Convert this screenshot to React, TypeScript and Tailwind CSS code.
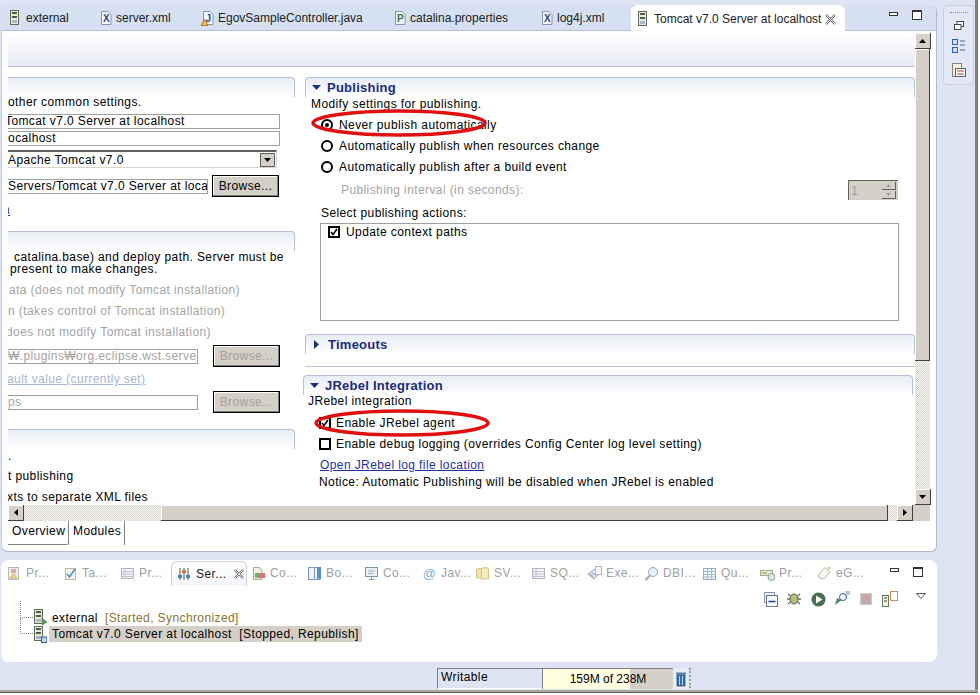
import React from "react";

const font = { fontFamily: '"Liberation Sans", "Noto Sans CJK KR", sans-serif' };

function ServerIcon({ badge }: { badge?: "play" | "stop" }) {
  return (
    <svg width="14" height="17" viewBox="0 0 14 17" className="shrink-0">
      <rect x="1.5" y="0.5" width="8" height="14" fill="#e8e8dc" stroke="#5f6b55" />
      <rect x="3" y="2" width="5" height="2" fill="#4f5a48" />
      <rect x="3" y="6" width="5" height="2" fill="#4f5a48" />
      <rect x="3" y="10" width="5" height="3" fill="#a8b8c8" />
      {badge === "play" && <path d="M9 9 L14 13 L9 16 Z" fill="#5c9a5c" stroke="#3c6a3c" strokeWidth="0.5" />}
      {badge === "stop" && <rect x="8.5" y="11" width="5.5" height="5.5" fill="#bcd8f0" stroke="#1f5fa8" />}
    </svg>
  );
}

function FileIcon({ letter, color, warn }: { letter: string; color: string; warn?: boolean }) {
  return (
    <svg width="14" height="16" viewBox="0 0 14 16" className="shrink-0">
      <path d="M2.5 1.5 H9 L12 4.5 V14.5 H2.5 Z" fill="#f4f6fb" stroke="#8b93a8" />
      <text x="7.3" y="12" fontSize="10" fontWeight="700" textAnchor="middle" fill={color} fontFamily="Liberation Sans">{letter}</text>
      {warn && <path d="M0 15.5 L3.5 9.5 L7 15.5 Z" fill="#f2c040" stroke="#c24a2a" strokeWidth="0.8" />}
    </svg>
  );
}

function EditorTab({ icon, label, w }: { icon: React.ReactNode; label: string; w: string }) {
  return (
    <div className={`flex items-center gap-[3px] h-full text-[12px] text-[#222] whitespace-nowrap ${w}`}>
      {icon}
      <span>{label}</span>
    </div>
  );
}

function SectionHead({ open = true, title, className = "" }: { open?: boolean; title?: string; className?: string }) {
  return (
    <div className={`h-[20px] border-t border-l border-r border-[#b8c0d8] rounded-t-[4px] bg-gradient-to-b from-[#e8ecf4] to-white flex items-center pl-[6px] gap-[6px] ${className}`}>
      {title && (
        <>
          {open ? (
            <svg width="9" height="5" viewBox="0 0 9 5"><path d="M0 0 H9 L4.5 5 Z" fill="#1f2f80" /></svg>
          ) : (
            <svg width="6" height="9" viewBox="0 0 6 9" className="ml-[2px] mr-[2px]"><path d="M0 0 L5 4.5 L0 9 Z" fill="#1f2f80" /></svg>
          )}
          <span className="text-[13px] font-bold text-[#1c2a7c] tracking-[0.25px]">{title}</span>
        </>
      )}
    </div>
  );
}

function Radio({ on, label }: { on?: boolean; label: string }) {
  return (
    <div className="flex items-center h-[21px] gap-[6px] pl-[16px]">
      <span className="w-[12px] h-[12px] rounded-full border-2 border-black bg-white flex items-center justify-center">
        {on && <span className="w-[4px] h-[4px] rounded-full bg-black" />}
      </span>
      <span>{label}</span>
    </div>
  );
}

function Check({ on }: { on?: boolean }) {
  return (
    <span className="w-[12px] h-[12px] border-2 border-black bg-white flex items-center justify-center shrink-0">
      {on && (
        <svg width="8" height="8" viewBox="0 0 8 8"><path d="M1 4 L3 6.5 L7 1" stroke="#000" strokeWidth="1.6" fill="none" /></svg>
      )}
    </span>
  );
}

function Browse({ disabled, className = "" }: { disabled?: boolean; className?: string }) {
  return (
    <div className={`w-[67px] h-[22px] shrink-0 bg-[#d4d0c8] border border-black flex items-center justify-center shadow-[inset_-1px_-1px_0_#808080,inset_1px_1px_0_#fff] ${disabled ? "text-[#a4a098]" : "text-black"} ${className}`}>
      Browse...
    </div>
  );
}

function LeftPane() {
  return (
    <div className="w-[287px] shrink-0 overflow-hidden whitespace-nowrap">
      <SectionHead className="-ml-[3px]" />
      <div className="h-[15px] -mt-[2px] mb-[4px] leading-[15px]">other common settings.</div>
      <div className="h-[15px] w-[272px] border-y border-r border-[#a0a0a0] leading-[13px] overflow-hidden mb-[2px]"><span className="-ml-[3px] inline-block">Tomcat v7.0 Server at localhost</span></div>
      <div className="h-[15px] w-[272px] border-y border-r border-[#a0a0a0] leading-[13px] overflow-hidden"><span className="-ml-[3px] inline-block">localhost</span></div>
      <div className="h-[18px] w-[269px] mt-[4px] border-t-2 border-b border-r border-t-[#606060] border-[#d8d4cc] flex items-center justify-between pr-[1px]">
        <span>Apache Tomcat v7.0</span>
        <span className="w-[15px] h-[14px] bg-[#d4d0c8] border border-[#606060] flex items-center justify-center">
          <svg width="7" height="4" viewBox="0 0 7 4"><path d="M0 0 H7 L3.5 4 Z" fill="#000" /></svg>
        </span>
      </div>
      <div className="flex items-center h-[22px] mt-[7px] gap-[4px]">
        <div className="h-[15px] w-[200px] border-y border-r border-[#a0a0a0] leading-[13px] overflow-hidden">Servers/Tomcat v7.0 Server at localhost</div>
        <Browse />
      </div>
      <div className="h-[14px] mt-[6px] leading-[14px] text-[#1f2f9f] underline -ml-[5px]">n</div>
      <SectionHead className="mt-[14px] -ml-[3px]" />
      <div className="h-[12px] leading-[12px] pl-[6px]">catalina.base) and deploy path. Server must be</div>
      <div className="h-[12px] leading-[12px] pl-[2px]">present to make changes.</div>
      <div className="text-[#a4a4a4]">
        <div className="h-[21px] mt-[5px] leading-[21px] pl-[1px]">ata (does not modify Tomcat installation)</div>
        <div className="h-[21px] leading-[21px]">n (takes control of Tomcat installation)</div>
        <div className="h-[21px] leading-[21px] -ml-[2px]">does not modify Tomcat installation)</div>
      </div>
      <div className="flex items-center h-[22px] mt-[2px] gap-[15px]">
        <div className="h-[15px] w-[190px] border-y border-r border-[#a0a0a0] text-[#a4a4a4] leading-[13px] overflow-hidden">₩.plugins₩org.eclipse.wst.server</div>
        <Browse disabled />
      </div>
      <div className="h-[14px] mt-[5px] leading-[14px] text-[#a8b4d4] underline -ml-[1px]">ault value (currently set)</div>
      <div className="flex items-center h-[22px] mt-[5px] gap-[15px]">
        <div className="h-[15px] w-[190px] border-y border-r border-[#a0a0a0] text-[#a4a4a4] leading-[13px]">ps</div>
        <Browse disabled />
      </div>
      <SectionHead className="mt-[16px] -ml-[3px]" />
      <div className="h-[14px] leading-[14px]">.</div>
      <div className="h-[21px] mt-[3px] leading-[21px]">t publishing</div>
      <div className="h-[21px] leading-[21px] -ml-[1px]">xts to separate XML files</div>
    </div>
  );
}

function RightPane() {
  return (
    <div className="relative flex-1 min-w-0 whitespace-nowrap">
      <div className="pl-[2px]">
        <SectionHead title="Publishing" />
        <div className="pl-[6px] h-[12px] leading-[15px]">Modify settings for publishing.</div>
        <div className="mt-[5px]">
          <Radio on label="Never publish automatically" />
          <Radio label="Automatically publish when resources change" />
          <Radio label="Automatically publish after a build event" />
        </div>
        <div className="flex items-center h-[22px] mt-[2px] pl-[36px] pr-[17px] justify-between text-[#a4a4a4]">
          <span>Publishing interval (in seconds):</span>
          <span className="w-[50px] h-[20px] bg-[#d4d0c8] border-t border-l border-[#606060] flex items-center justify-between pl-[2px] pr-[2px] text-[#a09c94]">
            1
            <span className="flex flex-col gap-[1px]">
              <span className="w-[14px] h-[8px] bg-[#d4d0c8] border-r border-b border-[#606060] flex items-center justify-center"><svg width="5" height="3" viewBox="0 0 5 3"><path d="M0 3 H5 L2.5 0 Z" fill="#a09c94" /></svg></span>
              <span className="w-[14px] h-[8px] bg-[#d4d0c8] border-r border-b border-[#606060] flex items-center justify-center"><svg width="5" height="3" viewBox="0 0 5 3"><path d="M0 0 H5 L2.5 3 Z" fill="#a09c94" /></svg></span>
            </span>
          </span>
        </div>
        <div className="h-[15px] mt-[5px] pl-[16px] leading-[15px]">Select publishing actions:</div>
        <div className="ml-[15px] w-[579px] h-[98px] mt-[2px] border border-[#a0a0a0] pt-[1px] pl-[7px]">
          <div className="flex items-center gap-[6px] h-[14px]"><Check on />Update context paths</div>
        </div>
        <SectionHead title="Timeouts" open={false} className="mt-[13px]" />
        <div className="h-[12px]" />
        <div className="h-[1px] bg-[#b8c0d8] rounded-t" />
      </div>
      <SectionHead title="JRebel Integration" className="mt-[8px] mr-[2px]" />
      <div className="pl-[5px] h-[14px] -mt-[1px] leading-[14px]">JRebel integration</div>
      <div className="pl-[16px] mt-[4px] flex items-center h-[21px] gap-[5px]"><Check on />Enable JRebel agent</div>
      <div className="pl-[16px] flex items-center h-[21px] gap-[5px]"><Check />Enable debug logging (overrides Config Center log level setting)</div>
      <div className="pl-[17px] mt-[1px] h-[21px] leading-[21px] text-[#1f2f9f] underline">Open JRebel log file location</div>
      <div className="pl-[16px] h-[15px] -mt-[1px] leading-[15px]">Notice: Automatic Publishing will be disabled when JRebel is enabled</div>

      <svg className="absolute left-[1px] top-[30px] pointer-events-none" width="190" height="32" viewBox="0 0 190 32">
        <ellipse cx="95" cy="16" rx="86" ry="12" fill="none" stroke="#e01010" strokeWidth="3.5" />
      </svg>
      <svg className="absolute left-[6px] top-[330px] pointer-events-none" width="190" height="34" viewBox="0 0 190 34">
        <ellipse cx="93" cy="16" rx="86" ry="12" fill="none" stroke="#e01010" strokeWidth="3.5" />
      </svg>
    </div>
  );
}

const dither = "bg-[repeating-conic-gradient(#d4d0c8_0_25%,#ffffff_0_50%)] bg-[length:2px_2px]";

function SbButton({ children }: { children: React.ReactNode }) {
  return (
    <div className="w-[16px] h-[16px] shrink-0 bg-[#d4d0c8] border-r border-b border-[#404040] shadow-[inset_1px_1px_0_#fff] flex items-center justify-center">
      {children}
    </div>
  );
}

function VScroll() {
  return (
    <div className="w-[15px] shrink-0 flex flex-col mt-[2px]">
      <SbButton><svg width="7" height="4" viewBox="0 0 7 4"><path d="M0 4 H7 L3.5 0 Z" fill="#000" /></svg></SbButton>
      <div className="h-[312px] bg-[#d4d0c8] border-r border-b border-[#404040] shadow-[inset_1px_1px_0_#fff]" />
      <div className={`flex-1 ${dither}`} />
      <SbButton><svg width="7" height="4" viewBox="0 0 7 4"><path d="M0 0 H7 L3.5 4 Z" fill="#000" /></svg></SbButton>
    </div>
  );
}

function HScroll() {
  return (
    <div className="flex h-[16px]">
      <SbButton><svg width="4" height="7" viewBox="0 0 4 7"><path d="M4 0 V7 L0 3.5 Z" fill="#000" /></svg></SbButton>
      <div className={`w-[137px] ${dither}`} />
      <div className="w-[727px] bg-[#d4d0c8] border-r border-b border-[#404040] shadow-[inset_1px_1px_0_#fff]" />
      <div className={`w-[9px] ${dither}`} />
      <SbButton><svg width="4" height="7" viewBox="0 0 4 7"><path d="M0 0 V7 L4 3.5 Z" fill="#000" /></svg></SbButton>
      <div className="flex-1 bg-[#d4d0c8]" />
    </div>
  );
}

function CloseX({ size }: { size: number }) {
  return (
    <svg width={size} height={size} viewBox="0 0 11 11" className="shrink-0">
      <path d="M1 1 L10 10 M10 1 L1 10" stroke="#666" strokeWidth="2.4" />
      <path d="M1 1 L10 10 M10 1 L1 10" stroke="#fff" strokeWidth="0.9" />
    </svg>
  );
}

function Editor() {
  return (
    <div className="h-[547px] mt-[5px] ml-[1px] w-[936px] bg-white rounded-[6px] border-r border-b border-[#b0b8cc] shadow-[inset_1px_0_0_#c0c8dc] overflow-hidden flex flex-col">
      <div className="h-[26px] shrink-0 flex items-end bg-[#d5e1f1] border-b border-[#b8c0d8] relative">
        <div className="flex items-center h-[26px] pl-[8px] pt-[2px]">
          <EditorTab w="w-[90px]" icon={<ServerIcon />} label="external" />
          <EditorTab w="w-[102px]" icon={<FileIcon letter="X" color="#2a4a90" />} label="server.xml" />
          <EditorTab w="w-[192px]" icon={<FileIcon letter="J" color="#2a4a90" warn />} label="EgovSampleController.java" />
          <EditorTab w="w-[147px]" icon={<FileIcon letter="P" color="#3a7a3a" />} label="catalina.properties" />
          <EditorTab w="w-[91px]" icon={<FileIcon letter="X" color="#2a4a90" />} label="log4j.xml" />
        </div>
        <div className="h-[27px] -mb-[1px] w-[214px] shrink-0 bg-white rounded-t-[6px] flex items-center gap-[3px] pl-[6px] pt-[2px] text-[#222] text-[12px] whitespace-nowrap border-t border-[#b8c0d8]">
          <ServerIcon />
          <span>Tomcat v7.0 Server at localhost</span>
          <span className="ml-[1px]"><CloseX size={11} /></span>
        </div>
        <div className="flex-1 flex justify-end items-center h-[26px] pr-[14px] gap-[14px]">
          <span className="w-[9px] h-[4px] border border-[#333] bg-white -mt-[6px]" />
          <span className="w-[10px] h-[10px] border border-[#333] border-t-2 bg-white -mt-[4px]" />
        </div>
      </div>
      <div className="h-[474px] shrink-0 flex">
        <div className="w-[7px] shrink-0" />
        <div className="flex-1 min-w-0 flex flex-col">
          <div className="h-[36px] shrink-0 bg-gradient-to-b from-white to-[#e8ebf4] border-b border-[#b8c0d8]" />
          <div className="flex-1 flex text-[12px] text-black tracking-[0.4px] pt-[10px] gap-[8px] overflow-hidden">
            <LeftPane />
            <RightPane />
          </div>
        </div>
        <VScroll />
        <div className="w-[6px] shrink-0" />
      </div>
      <div className="pl-[7px] pr-[6px]"><HScroll /></div>
      <div className="pl-[7px] h-[24px] flex text-[12px] text-black tracking-[0.4px]">
        <div className="w-[60px] h-[24px] border-b border-[#808080] pl-[4px] leading-[21px] rounded-br-[2px]">Overview</div>
        <div className="w-[57px] h-[24px] border-l border-r border-[#808080] pl-[4px] leading-[21px]">Modules</div>
      </div>
    </div>
  );
}

function ViewIcon({ kind }: { kind: string }) {
  const cls = "shrink-0";
  const s = { width: 15, height: 15, viewBox: "0 0 15 15", className: cls };
  switch (kind) {
    case "props":
      return <svg {...s}><rect x="1.5" y="1.5" width="10" height="12" fill="#f0f0f0" stroke="#b8b8b8" /><rect x="4" y="3" width="5" height="4" fill="#e0a8a0" /><path d="M3 12 L6.5 7.5 L10 12 Z" fill="#f0dc90" stroke="#c0b070" /></svg>;
    case "tasks":
      return <svg {...s}><rect x="2.5" y="2.5" width="10" height="11" fill="#f4f4e8" stroke="#b8b8a0" /><path d="M4 8 L6.5 11 L12 3" stroke="#5090d8" strokeWidth="1.6" fill="none" /></svg>;
    case "table":
      return <svg {...s}><rect x="1.5" y="2.5" width="12" height="10" fill="#f4f4f8" stroke="#b0b4c4" /><path d="M2 5.5 H13 M2 8 H13 M2 10.5 H13" stroke="#c0c4d0" /><path d="M5 3 V12" stroke="#c0c4d0" /></svg>;
    case "console":
      return <svg {...s}><path d="M2.5 1.5 H8 L11 4 V13.5 H2.5 Z" fill="#f0f0e4" stroke="#a8a890" /><rect x="4" y="7" width="4" height="5" fill="#70b070" /><rect x="8" y="7" width="6" height="5" fill="#e07070" /></svg>;
    case "book":
      return <svg {...s}><rect x="1.5" y="1.5" width="6" height="12" fill="#f0f4fa" stroke="#8098b8" /><rect x="7.5" y="1.5" width="5" height="12" fill="#f0f4fa" stroke="#8098b8" /><path d="M10 1 H14 V14 L12 11.5 L10 14 Z" fill="#5090d0" /></svg>;
    case "monitor":
      return <svg {...s}><rect x="1.5" y="1.5" width="12" height="9" fill="#e8f0f4" stroke="#7a98a8" /><path d="M4 5 H11 M4 7.5 H9" stroke="#a0b4c0" /><path d="M5 13.5 H10 M7.5 11 V13" stroke="#7a98a8" /></svg>;
    case "at":
      return <svg {...s}><text x="7.5" y="12" fontSize="13" textAnchor="middle" fill="#80b0d8" fontFamily="Liberation Sans">@</text></svg>;
    case "cyl":
      return <svg {...s}><ellipse cx="5" cy="4" rx="3.5" ry="1.5" fill="#f4ecc0" stroke="#d0c488" /><path d="M1.5 4 V12 H8.5 V4" fill="#f0e4a8" stroke="#d0c488" /><ellipse cx="10" cy="3" rx="3.5" ry="1.5" fill="#f4ecc0" stroke="#d0c488" /><path d="M6.5 3 V13 H13.5 V3" fill="#f4ecc0" stroke="#d0c488" /></svg>;
    case "exec":
      return <svg {...s}><path d="M1 8 L8 3 L13 7 L7 13 Z" fill="#eef0f8" stroke="#9098b0" /><rect x="8.5" y="0.5" width="6" height="8" fill="#f8f8ff" stroke="#b0b4c4" /><path d="M3 8 L7 11 M5 6.5 L9 9.5" stroke="#8090b8" /></svg>;
    case "search":
      return <svg {...s}><circle cx="9" cy="6" r="4.5" fill="#e8f0f8" stroke="#a0a8b0" /><path d="M6 9.5 L1.5 14" stroke="#a8a8a0" strokeWidth="2.2" /></svg>;
    case "grid":
      return <svg {...s}><rect x="1.5" y="2.5" width="12" height="11" fill="#f4f8fc" stroke="#90b0c8" /><path d="M1.5 5.5 H13.5 M1.5 8.5 H13.5 M1.5 11 H13.5 M5.5 3 V13 M9.5 3 V13" stroke="#a0bcd0" /></svg>;
    case "prog":
      return <svg {...s}><rect x="0.5" y="4.5" width="12" height="5" fill="#e8e8d0" stroke="#a8a890" /><rect x="2" y="6" width="5" height="2" fill="#c0c090" /><circle cx="11.5" cy="11" r="3.5" fill="#e0e8e0" stroke="#80a090" /></svg>;
    default:
      return <svg {...s}><path d="M2 8 L8 1.5 L13 6 L7 13 L2 12 Z" fill="#f8f8f4" stroke="#b8b8b0" /><path d="M12 0.5 V4 M10.5 2 H14" stroke="#d8c870" /></svg>;
  }
}

const viewTabs2: [string, string, number][] = [
  ["Co...", "console", 56], ["Bo...", "book", 57], ["Co...", "monitor", 58], ["Jav...", "at", 53],
  ["SV...", "cyl", 56], ["SQ...", "table", 56], ["Exe...", "exec", 57], ["DBI...", "search", 58],
  ["Qu...", "grid", 58], ["Pr...", "prog", 57], ["eG...", "egov", 40],
];

function ToolIcon({ kind }: { kind: string }) {
  if (kind === "collapse") return <svg width="15" height="15" viewBox="0 0 15 15"><rect x="1.5" y="0.5" width="10" height="10" fill="#eef" stroke="#8a94a8" /><rect x="3.5" y="3.5" width="11" height="11" fill="#f8f8ff" stroke="#6a7488" /><path d="M5.5 9.5 H12.5" stroke="#1f3f90" strokeWidth="1.5" /></svg>;
  if (kind === "debug") return <svg width="16" height="16" viewBox="0 0 16 16"><path d="M2 3 L14 13 M14 3 L2 13 M1 8 H15" stroke="#223" /><ellipse cx="8" cy="8" rx="4" ry="5" fill="#b8c070" stroke="#555" /></svg>;
  if (kind === "run") return <svg width="15" height="15" viewBox="0 0 15 15"><circle cx="7.5" cy="7.5" r="7" fill="#4a7050" /><path d="M5 3.5 L11.5 7.5 L5 11.5 Z" fill="#fff" /></svg>;
  if (kind === "profile") return <svg width="16" height="16" viewBox="0 0 16 16"><path d="M1 14 L8 9 L3 7 Z" fill="#5a8a5a" /><circle cx="9" cy="6" r="3.5" fill="#fff" stroke="#2a5a9a" /><path d="M11 1 H16 M12 3 H16" stroke="#7a8aa0" /></svg>;
  if (kind === "stop") return <svg width="12" height="12" viewBox="0 0 12 12"><rect x="0.5" y="0.5" width="11" height="11" fill="#c8a8a8" stroke="#c8ccd4" /></svg>;
  return <svg width="16" height="16" viewBox="0 0 16 16"><rect x="0.5" y="4.5" width="6" height="11" fill="#f0f0e0" stroke="#707860" /><rect x="8.5" y="0.5" width="7" height="9" fill="#fff" stroke="#c89060" /><path d="M2 7 H5 M2 10 H5" stroke="#404840" /></svg>;
}

function ServersView() {
  return (
    <div className="mt-[8px] ml-[1px] w-[936px] h-[102px] bg-white rounded-[8px] flex flex-col text-[12px] tracking-[0.4px] whitespace-nowrap">
      <div className="h-[26px] shrink-0 flex items-center text-[#a0a0a0] pl-[6px] pr-[14px]">
        <div className="flex items-center gap-[4px] w-[56px]"><ViewIcon kind="props" />Pr...</div>
        <div className="flex items-center gap-[4px] w-[57px]"><ViewIcon kind="tasks" />Ta...</div>
        <div className="flex items-center gap-[4px] w-[51px]"><ViewIcon kind="table" />Pr...</div>
        <div className="h-[25px] w-[76px] shrink-0 flex items-center gap-[5px] pl-[5px] rounded-t-[6px] border-t border-l border-r border-[#c8d0e0] text-[#222] bg-gradient-to-b from-white to-[#f4f6fb] mr-[4px]">
          <svg width="14" height="14" viewBox="0 0 14 14" className="shrink-0"><path d="M3 1 V13 M7 1 V13 M11 1 V13" stroke="#555" /><rect x="1" y="8" width="4" height="3" fill="#4a80c0" /><rect x="5" y="3" width="4" height="3" fill="#d08040" /><rect x="9" y="8" width="4" height="3" fill="#4a80c0" /></svg>
          <span>Ser...</span>
          <span className="ml-[3px]"><CloseX size={10} /></span>
        </div>
        {viewTabs2.map(([t, k, w], i) => (
          <div key={i} className="flex items-center gap-[4px] shrink-0" style={{ width: w }}>
            <ViewIcon kind={k} />{t}
          </div>
        ))}
        <div className="flex-1 flex justify-end items-center gap-[14px]">
          <span className="w-[9px] h-[4px] border border-[#333] bg-white -mt-[6px]" />
          <span className="w-[10px] h-[10px] border border-[#333] border-t-2 bg-white -mt-[2px]" />
        </div>
      </div>
      <div className="h-[22px] shrink-0 flex items-center justify-end pr-[11px] mt-[2px]">
        {["collapse", "debug", "run", "profile", "stop", "copy"].map((k) => (
          <span key={k} className="w-[24px] flex justify-center"><ToolIcon kind={k} /></span>
        ))}
        <svg width="10" height="6" viewBox="0 0 10 6" className="ml-[14px] -mt-[6px]"><path d="M0.5 0.5 H9.5 L5 5.5 Z" fill="#fff" stroke="#555" /></svg>
      </div>
      <div className="pl-[18px] -mt-[1px] flex">
        <div className="w-[14px] shrink-0 relative">
          <div className="h-[17px] border-l border-b border-dotted border-[#888] -mt-[8px] ml-[1px]" />
          <div className="h-[16px] border-l border-b border-dotted border-[#888] ml-[1px]" />
        </div>
        <div>
          <div className="flex items-center h-[17px] gap-[5px]"><ServerIcon badge="play" /><span>external</span><span className="text-[#8a7430] ml-[2px]">[Started, Synchronized]</span></div>
          <div className="flex items-center h-[16px] gap-[2px]"><ServerIcon badge="stop" /><span className="bg-[#d4d0c8] pl-[3px] pr-[3px] h-[16px] leading-[16px]">Tomcat v7.0 Server at localhost&nbsp;&nbsp;[Stopped, Republish]</span></div>
        </div>
      </div>
    </div>
  );
}

function StatusBar() {
  return (
    <div className="h-[22px] mt-[6px] flex text-[12px] tracking-[0.4px]">
      <div className="w-[437px] shrink-0" />
      <div className="w-[105px] h-[21px] border-l border-t border-b border-t-[#808080] border-l-[#808080] border-b-white pl-[3px] leading-[16px]">Writable</div>
      <div className="relative w-[131px] h-[21px] border-t border-l border-[#808080] bg-[#d4d0c8] flex items-center justify-center">
        <div className="absolute inset-y-0 left-0 w-[87px] bg-[#fffee0]" />
        <span className="relative tracking-normal">159M of 238M</span>
      </div>
      <div className="w-[15px] h-[21px] flex items-center justify-center bg-[#e8ecf8]">
        <svg width="12" height="16" viewBox="0 0 12 16"><rect x="1" y="1.5" width="10" height="2" fill="#5080a0" /><path d="M2 4 H10 V15 H2 Z" fill="#2a70c0" stroke="#305060" strokeWidth="0.8" /><path d="M4.5 5 V14 M7.5 5 V14" stroke="#bcd8f0" /></svg>
      </div>
      <div className="w-[3px] ml-[1px] h-[20px] border-l-2 border-dotted border-[#a09c90]" />
    </div>
  );
}

function Trim() {
  return (
    <div className="w-[31px] h-[80px] ml-[6px] mt-[5px] rounded-[4px] border border-[#c8d0e4] bg-[#e4e8f6] flex flex-col items-center pt-[6px]">
      <div className="w-[18px] border-t border-dotted border-[#888]" />
      <svg width="10" height="9" viewBox="0 0 10 9" className="mt-[8px]"><rect x="3" y="0.5" width="6.5" height="5" fill="#fff" stroke="#444" /><rect x="0.5" y="3.5" width="6.5" height="5" fill="#fff" stroke="#444" /></svg>
      <svg width="14" height="15" viewBox="0 0 14 15" className="mt-[9px]"><rect x="0.5" y="0.5" width="5" height="5" fill="#cfe0f8" stroke="#2a60c0" /><rect x="0.5" y="8.5" width="5" height="5" fill="#cfe0f8" stroke="#2a60c0" /><path d="M8 2 H13 M8 6 H13 M8 11 H13" stroke="#3a6a9a" /></svg>
      <svg width="14" height="14" viewBox="0 0 14 14" className="mt-[9px]"><rect x="0.5" y="0.5" width="9" height="13" fill="#f0f0e0" stroke="#808870" /><rect x="3.5" y="5.5" width="10" height="8" fill="#fff" stroke="#606060" /><path d="M5 8 H12 M5 11 H12" stroke="#c03030" /></svg>
    </div>
  );
}

export default function App() {
  return (
    <div className="w-[980px] h-[695px] overflow-hidden bg-white flex flex-col" style={font}>
      <div className="h-[690px] w-[978px] flex bg-[#dfe4f4] border-r-[3px] border-[#808080]">
        <div className="w-[937px] shrink-0 flex flex-col">
          <Editor />
          <ServersView />
          <StatusBar />
        </div>
        <Trim />
      </div>
      <div className="h-[3px] w-[978px] bg-[#aca899] border-b border-[#606060]" />
    </div>
  );
}
